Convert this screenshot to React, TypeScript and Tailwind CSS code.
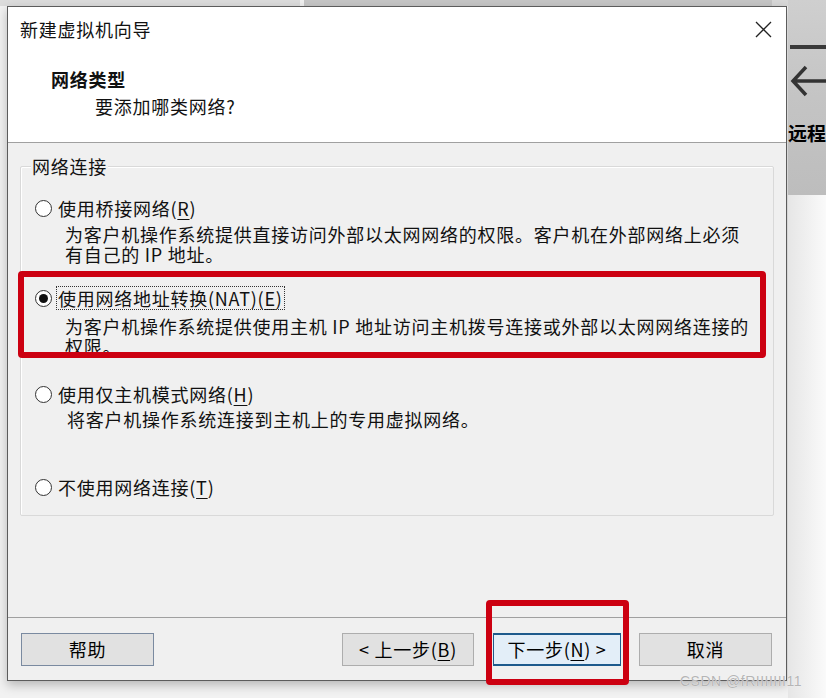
import React from "react";

const FONT = { fontFamily: '"Noto Sans CJK SC", "Noto Sans", sans-serif' };

function Radio({ checked }: { checked?: boolean }) {
  return (
    <span className="w-[17px] h-[17px] rounded-full border-[1.5px] border-[#333] bg-white flex items-center justify-center shrink-0">
      {checked && <span className="w-[9px] h-[9px] rounded-full bg-[#111]" />}
    </span>
  );
}

function Btn({ children, className = "" }: { children: React.ReactNode; className?: string }) {
  return (
    <div
      className={
        "h-[33px] flex items-center justify-center text-[18px] text-black " + className
      }
    >
      {children}
    </div>
  );
}

export default function App() {
  return (
    <div
      className="w-[826px] h-[698px] overflow-hidden flex bg-[#f2f2f2] text-[#111] tracking-[0.75px] relative"
      style={FONT}
    >
      {/* left area with dialog */}
      <div className="w-[788px] flex flex-col relative">
        {/* top strip of background */}
        <div className="h-[6px] flex shrink-0">
          <div className="w-[300px] bg-[#dcdcdc]" />
          <div className="w-[4px] bg-[#f0f0f0]" />
          <div className="w-[468px] bg-[#c6c6c6]" />
          <div className="flex-1 bg-[#d8d8d8]" />
        </div>
        {/* dialog */}
        <div className="ml-[7px] w-[780px] h-[675px] border border-[#5c5c5c] flex flex-col shadow-[0_4px_10px_rgba(0,0,0,0.25)] bg-[#f0f0f0]">
          {/* title + header (white) */}
          <div className="h-[135px] bg-white flex flex-col shrink-0">
            <div className="flex items-center justify-between pl-[12px] pr-[14px] pt-[10px] h-[34px]">
              <span className="text-[18px] leading-[22px]">新建虚拟机向导</span>
              <svg width="17" height="17" viewBox="0 0 17 17">
                <path d="M1 1 L16 16 M16 1 L1 16" stroke="#222" strokeWidth="1.3" fill="none" />
              </svg>
            </div>
            <div className="pl-[43px] mt-[26px] text-[18px] leading-[24px] font-bold">网络类型</div>
            <div className="pl-[87px] mt-[3px] text-[18px] leading-[24px]">要添加哪类网络?</div>
          </div>
          <div className="h-[1px] bg-[#a0a0a0] shrink-0" />
          {/* body */}
          <div className="h-[474px] shrink-0 flex flex-col px-[12px] pt-[23px]">
            <div className="relative h-[350px] border border-[#d9d9d9] rounded-[2px] shadow-[inset_1px_1px_0_#ffffff]">
              <div className="absolute left-[10px] top-[-13px] px-[1px] bg-[#f0f0f0] text-[18px] leading-[24px]">
                网络连接
              </div>
              <div className="flex flex-col pl-[14px] pt-[29px] text-[18px]">
                {/* bridge */}
                <div className="flex items-center h-[24px] gap-[6px]">
                  <Radio />
                  <span className="leading-[24px]">
                    使用桥接网络(<span className="underline underline-offset-[3px]">R</span>)
                  </span>
                </div>
                <div className="pl-[30px] mt-[4px] leading-[20px]">
                  <div className="h-[20px]">为客户机操作系统提供直接访问外部以太网网络的权限。客户机在外部网络上必须</div>
                  <div className="h-[20px]">有自己的 IP 地址。</div>
                </div>
                {/* NAT */}
                <div className="flex items-center h-[24px] gap-[5px] mt-[22px]">
                  <Radio checked />
                  <span className="leading-[22px] outline outline-1 outline-dotted outline-[#333] px-[1px]">
                    使用网络地址转换(NAT)(<span className="underline underline-offset-[3px]">E</span>)
                  </span>
                </div>
                <div className="pl-[30px] mt-[6px] leading-[20px]">
                  <div className="h-[20px]">为客户机操作系统提供使用主机 IP 地址访问主机拨号连接或外部以太网网络连接的</div>
                  <div className="h-[20px]">权限。</div>
                </div>
                {/* host only */}
                <div className="flex items-center h-[24px] gap-[6px] mt-[26px]">
                  <Radio />
                  <span className="leading-[24px]">
                    使用仅主机模式网络(<span className="underline underline-offset-[3px]">H</span>)
                  </span>
                </div>
                <div className="pl-[32px] mt-[3px] leading-[20px]">
                  <div>将客户机操作系统连接到主机上的专用虚拟网络。</div>
                </div>
                {/* none */}
                <div className="flex items-center h-[24px] gap-[6px] mt-[46px]">
                  <Radio />
                  <span className="leading-[24px]">
                    不使用网络连接(<span className="underline underline-offset-[3px]">T</span>)
                  </span>
                </div>
              </div>
            </div>
          </div>
          <div className="h-[1px] bg-[#a0a0a0] shrink-0" />
          {/* buttons */}
          <div className="flex items-start pl-[13px] pt-[15px]">
            <Btn className="w-[133px] bg-[#e1e1e1] border border-[#7a8aa0]">帮助</Btn>
            <Btn className="w-[132px] ml-[188px] bg-[#e1e1e1] border border-[#adadad]">
              &lt; 上一步(<span className="underline underline-offset-[3px]">B</span>)
            </Btn>
            <Btn className="w-[128px] ml-[19px] bg-[#e3eef8] border-y-2 border-x border-[#1e5a8c]">
              下一步(<span className="underline underline-offset-[3px]">N</span>) &gt;
            </Btn>
            <Btn className="w-[133px] ml-[18px] bg-[#e1e1e1] border border-[#adadad]">取消</Btn>
          </div>
        </div>

        {/* red annotation boxes */}
        <div className="absolute left-[18px] top-[271px] w-[748px] h-[87px] border-[6px] border-[#cc0011] rounded-[4px]" />
        <div className="absolute left-[486px] top-[600px] w-[143px] h-[85px] border-[6px] border-[#cc0011] rounded-[4px]" />
      </div>

      {/* right background */}
      <div className="flex-1 flex flex-col relative">
        <div className="h-[195px] bg-gradient-to-b from-[#cfcfcf] via-[#c4c4c4] to-[#bdbdbd] relative">
          <div className="absolute left-[2px] right-0 top-[45px] h-[4px] bg-[#3a3a3a]" />
          <svg className="absolute left-[2px] top-[64px]" width="40" height="34" viewBox="0 0 40 34">
            <path d="M40 17 H3 M16 3 L3 17 L16 31" stroke="#333" strokeWidth="3.5" fill="none" />
          </svg>
          <div className="absolute left-0 top-[121px] text-[19px] leading-[24px] text-black font-bold tracking-normal whitespace-nowrap">
            远程
          </div>
        </div>
        <div className="flex-1 bg-gradient-to-r from-[#e6e6e6] to-[#fafafa]" />
      </div>

      {/* watermark */}
      <div
        className="absolute left-[680px] top-[672px] text-[14px] leading-[18px] text-[#b5b5b5] tracking-[0.5px] whitespace-nowrap [text-shadow:0_0_1px_#ffffff]"
        style={{ fontFamily: '"Liberation Sans", sans-serif' }}
      >
        CSDN @fRIIIIIII11
      </div>
    </div>
  );
}
